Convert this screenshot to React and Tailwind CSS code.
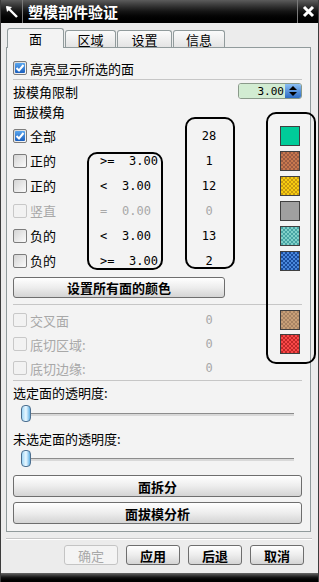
import React from 'react';

const cjk = "font-['Noto_Sans_CJK_SC',sans-serif]";
const mono = "font-['DejaVu_Sans_Mono',monospace]";

const Checkbox = ({ checked, disabled }) => (
    <span
        className={`relative inline-flex h-[14px] w-[14px] shrink-0 rounded-[2px] border ${
            disabled ? 'border-[#c8c8c8] bg-[#f2f2f2]' : 'border-[#7c7c7c] bg-linear-to-br from-[#d4d4d4] to-[#fbfbfb]'
        }`}
    >
        {checked && (
            <span className="absolute inset-[1px] flex items-center justify-center rounded-[1px] bg-linear-to-b from-[#5aa6ee] to-[#1a5fbe]">
                <svg width="10" height="10" viewBox="0 0 10 10">
                    <path d="M1.5 5 L4 7.5 L8.5 2" fill="none" stroke="#fff" strokeWidth="2" />
                </svg>
            </span>
        )}
    </span>
);

const Button = ({ children, disabled, className = '' }) => (
    <div
        className={`flex items-center justify-center rounded-[3px] border text-[13px] ${
            disabled
                ? 'border-[#c4c4c4] bg-[#f4f4f4] text-[#a8a8a8]'
                : 'border-[#6e6e6e] bg-linear-to-b from-white via-[#ededed] to-[#d4d4d4] font-bold text-black'
        } ${className}`}
    >
        {children}
    </div>
);

const Slider = () => (
    <div className="relative ml-[8px] h-[20px] w-[273px]">
        <div className="absolute left-0 right-0 top-[9px] h-[3px] border-t border-[#8c8c8c] bg-[#d8d8d8]" />
        <div className="absolute left-0 top-[1px] h-[17px] w-[10px] rounded-[4px] border border-[#4d6f8f] bg-linear-to-r from-[#9fd6f6] via-[#eaf8ff] to-[#5fb2e6]" />
    </div>
);

const Separator = ({ className = '' }) => (
    <div className={`h-px bg-[#c6c6c6] ${className}`} />
);

// swatch checker patterns
const faceRows = [
    { label: '全部', checked: true, count: '28', sw: 'bg-[#00cc99]' },
    { label: '正的', op: '>=', opW: 'w-[29px]', val: '3.00', count: '1', sw: 'bg-[image:repeating-conic-gradient(#c8784e_0_25%,#9c5c44_0_50%)] bg-size-[4px_4px]' },
    { label: '正的', op: '<', opW: 'w-[22px]', val: '3.00', count: '12', sw: 'bg-[image:repeating-conic-gradient(#f6cc10_0_25%,#c89a10_0_50%)] bg-size-[4px_4px]' },
    { label: '竖直', op: '=', opW: 'w-[22px]', val: '0.00', count: '0', disabled: true, sw: 'bg-[#a0a0a0]' },
    { label: '负的', op: '<', opW: 'w-[22px]', val: '3.00', count: '13', sw: 'bg-[image:repeating-conic-gradient(#80d0c8_0_25%,#48a4a4_0_50%)] bg-size-[4px_4px]' },
    { label: '负的', op: '>=', opW: 'w-[29px]', val: '3.00', count: '2', sw: 'bg-[image:repeating-conic-gradient(#4a88dc_0_25%,#1a4c9c_0_50%)] bg-size-[4px_4px]' },
];

const extraRows = [
    { label: '交叉面', sw: 'bg-[image:repeating-conic-gradient(#c8a078_0_25%,#a88464_0_50%)] bg-size-[4px_4px]' },
    { label: '底切区域:', sw: 'bg-[image:repeating-conic-gradient(#f84848_0_25%,#c02828_0_50%)] bg-size-[4px_4px]' },
    { label: '底切边缘:' },
];

const tabs = [
    { name: '面', w: 'w-[57px]', active: true },
    { name: '区域', w: 'w-[51px]' },
    { name: '设置', w: 'w-[55px]' },
    { name: '信息', w: 'w-[52px]' },
];

export default function App() {
    return (
        <div className={`relative flex h-[582px] w-[319px] flex-col overflow-hidden border-x border-[#3c3c3c] bg-[#ececec] ${cjk} text-[13px] leading-none text-black`}>
            {/* title bar */}
            <div className="flex h-[23px] shrink-0 items-center bg-linear-to-b from-[#5c5c5c] via-[#141414] to-black text-white">
                <div className="flex h-full w-[21px] items-center justify-center">
                    <svg width="14" height="14" viewBox="0 0 14 14">
                        <path d="M2 2 L12 12" stroke="#fff" strokeWidth="2.4" />
                        <path d="M1 1 L7 2 L2 7 Z" fill="#fff" />
                    </svg>
                </div>
                <div className="h-full w-px bg-[#7a7a7a]" />
                <div className="flex-1 pl-[5px] text-[15px] font-bold">塑模部件验证</div>
                <div className="h-full w-px bg-[#7a7a7a]" />
                <div className="flex h-full w-[20px] items-center justify-center">
                    <svg width="13" height="13" viewBox="0 0 13 13">
                        <path d="M2 2 L11 11 M11 2 L2 11" stroke="#fff" strokeWidth="3" />
                    </svg>
                </div>
            </div>

            <div className="flex flex-col pl-[5px] pt-[5px]">
                {/* tabs */}
                <div className="ml-[1px] flex h-[19px] items-end gap-px">
                    {tabs.map((t) =>
                        t.active ? (
                            <div key={t.name} className={`relative z-10 -mb-px flex h-[20px] ${t.w} items-center justify-center rounded-t-[3px] border border-b-0 border-[#919b9c] bg-[#f3f3f3]`}>
                                {t.name}
                            </div>
                        ) : (
                            <div key={t.name} className={`flex h-[17px] ${t.w} items-center justify-center rounded-t-[3px] border border-b-0 border-[#919b9c] bg-linear-to-b from-[#fbfbfb] to-[#e4e4e4]`}>
                                {t.name}
                            </div>
                        )
                    )}
                </div>

                {/* panel */}
                <div className="flex h-[485px] w-[305px] flex-col border border-[#919b9c] bg-[#f3f3f3] pl-[6px] pt-[10px]">
                    <div className="flex h-[20px] items-center gap-[3px]">
                        <Checkbox checked />
                        <span>高亮显示所选的面</span>
                    </div>
                    <Separator className="mt-px w-[289px]" />

                    <div className="mt-[2px] flex h-[18px] w-[289px] items-center justify-between">
                        <span>拔模角限制</span>
                        <div className="flex h-[16px] w-[64px] overflow-hidden rounded-[3px] border border-[#8a9a8a]">
                            <div className={`flex flex-1 items-center justify-end bg-[#d2ecd2] pr-px ${mono} text-[11px]`}>
                                <span>3.00</span>
                            </div>
                            <div className="flex w-[16px] flex-col items-center justify-center gap-[2px] bg-linear-to-b from-[#8cc0f4] to-[#2c6cc4]">
                                <svg width="8" height="4" viewBox="0 0 8 4"><path d="M0 4 L4 0 L8 4 Z" fill="#000" /></svg>
                                <svg width="8" height="4" viewBox="0 0 8 4"><path d="M0 0 L4 4 L8 0 Z" fill="#000" /></svg>
                            </div>
                        </div>
                    </div>

                    <div className="mt-px flex h-[20px] items-center">面拔模角</div>

                    <div className="mt-[2px] flex flex-col">
                        {faceRows.map((r, i) => (
                            <div key={i} className={`flex h-[25px] items-center ${r.disabled ? 'text-[#a8a8a8]' : ''}`}>
                                <div className="flex w-[87px] items-center gap-[3px]">
                                    <Checkbox checked={r.checked} disabled={r.disabled} />
                                    <span>{r.label}</span>
                                </div>
                                <div className={`flex w-[62px] items-center ${mono} text-[12px]`}>
                                    {r.op && (
                                        <>
                                            <span className={r.opW}>{r.op}</span>
                                            <span>{r.val}</span>
                                        </>
                                    )}
                                </div>
                                <div className="w-[23px]" />
                                <div className={`w-[48px] text-center ${mono} text-[12px]`}>{r.count}</div>
                                <div className="w-[47px]" />
                                <div className={`h-[20px] w-[20px] border border-[#404040] ${r.sw}`} />
                            </div>
                        ))}
                    </div>

                    <Button className="mt-[4px] h-[21px] w-[212px]">设置所有面的颜色</Button>

                    <Separator className="mt-[6px] w-[289px]" />

                    <div className="mt-[3px] flex flex-col text-[#a8a8a8]">
                        {extraRows.map((r) => (
                            <div key={r.label} className="flex h-[24px] items-center">
                                <div className="flex w-[172px] items-center gap-[3px]">
                                    <Checkbox disabled />
                                    <span>{r.label}</span>
                                </div>
                                <div className={`w-[48px] text-center ${mono} text-[12px]`}>0</div>
                                <div className="w-[47px]" />
                                {r.sw && <div className={`h-[20px] w-[20px] border border-[#404040] ${r.sw}`} />}
                            </div>
                        ))}
                    </div>

                    <Separator className="w-[289px]" />

                    <div className="mt-[2px] flex h-[18px] items-center">选定面的透明度:</div>
                    <div className="mt-[3px]"><Slider /></div>
                    <div className="mt-[5px] flex h-[18px] items-center">未选定面的透明度:</div>
                    <div className="mt-[2px]"><Slider /></div>

                    <Button className="mt-[6px] h-[22px] w-[289px]">面拆分</Button>
                    <Button className="mt-[5px] h-[22px] w-[289px]">面拔模分析</Button>
                </div>

                <div className="mt-[6px] w-[306px] border-b border-white">
                    <Separator />
                </div>

                <div className="ml-[58px] mt-[5px] flex gap-2">
                    <Button disabled className="h-[20px] w-[54px] font-normal">确定</Button>
                    <Button className="h-[20px] w-[54px]">应用</Button>
                    <Button className="h-[20px] w-[54px]">后退</Button>
                    <Button className="h-[20px] w-[54px]">取消</Button>
                </div>
            </div>

            <div className="flex-1" />
            <div className="h-[9px] shrink-0 bg-linear-to-b from-[#6a6a6a] via-[#141414] to-black" />

            {/* hand-drawn annotation boxes over the table */}
            <div className="pointer-events-none absolute left-[86px] top-[152px] h-[118px] w-[76px] rounded-[10px] border-2 border-black" />
            <div className="pointer-events-none absolute left-[184px] top-[117px] h-[152px] w-[50px] rounded-[10px] border-2 border-black" />
            <div className="pointer-events-none absolute left-[265px] top-[112px] h-[252px] w-[50px] rounded-[10px] border-2 border-black" />
        </div>
    );
}
